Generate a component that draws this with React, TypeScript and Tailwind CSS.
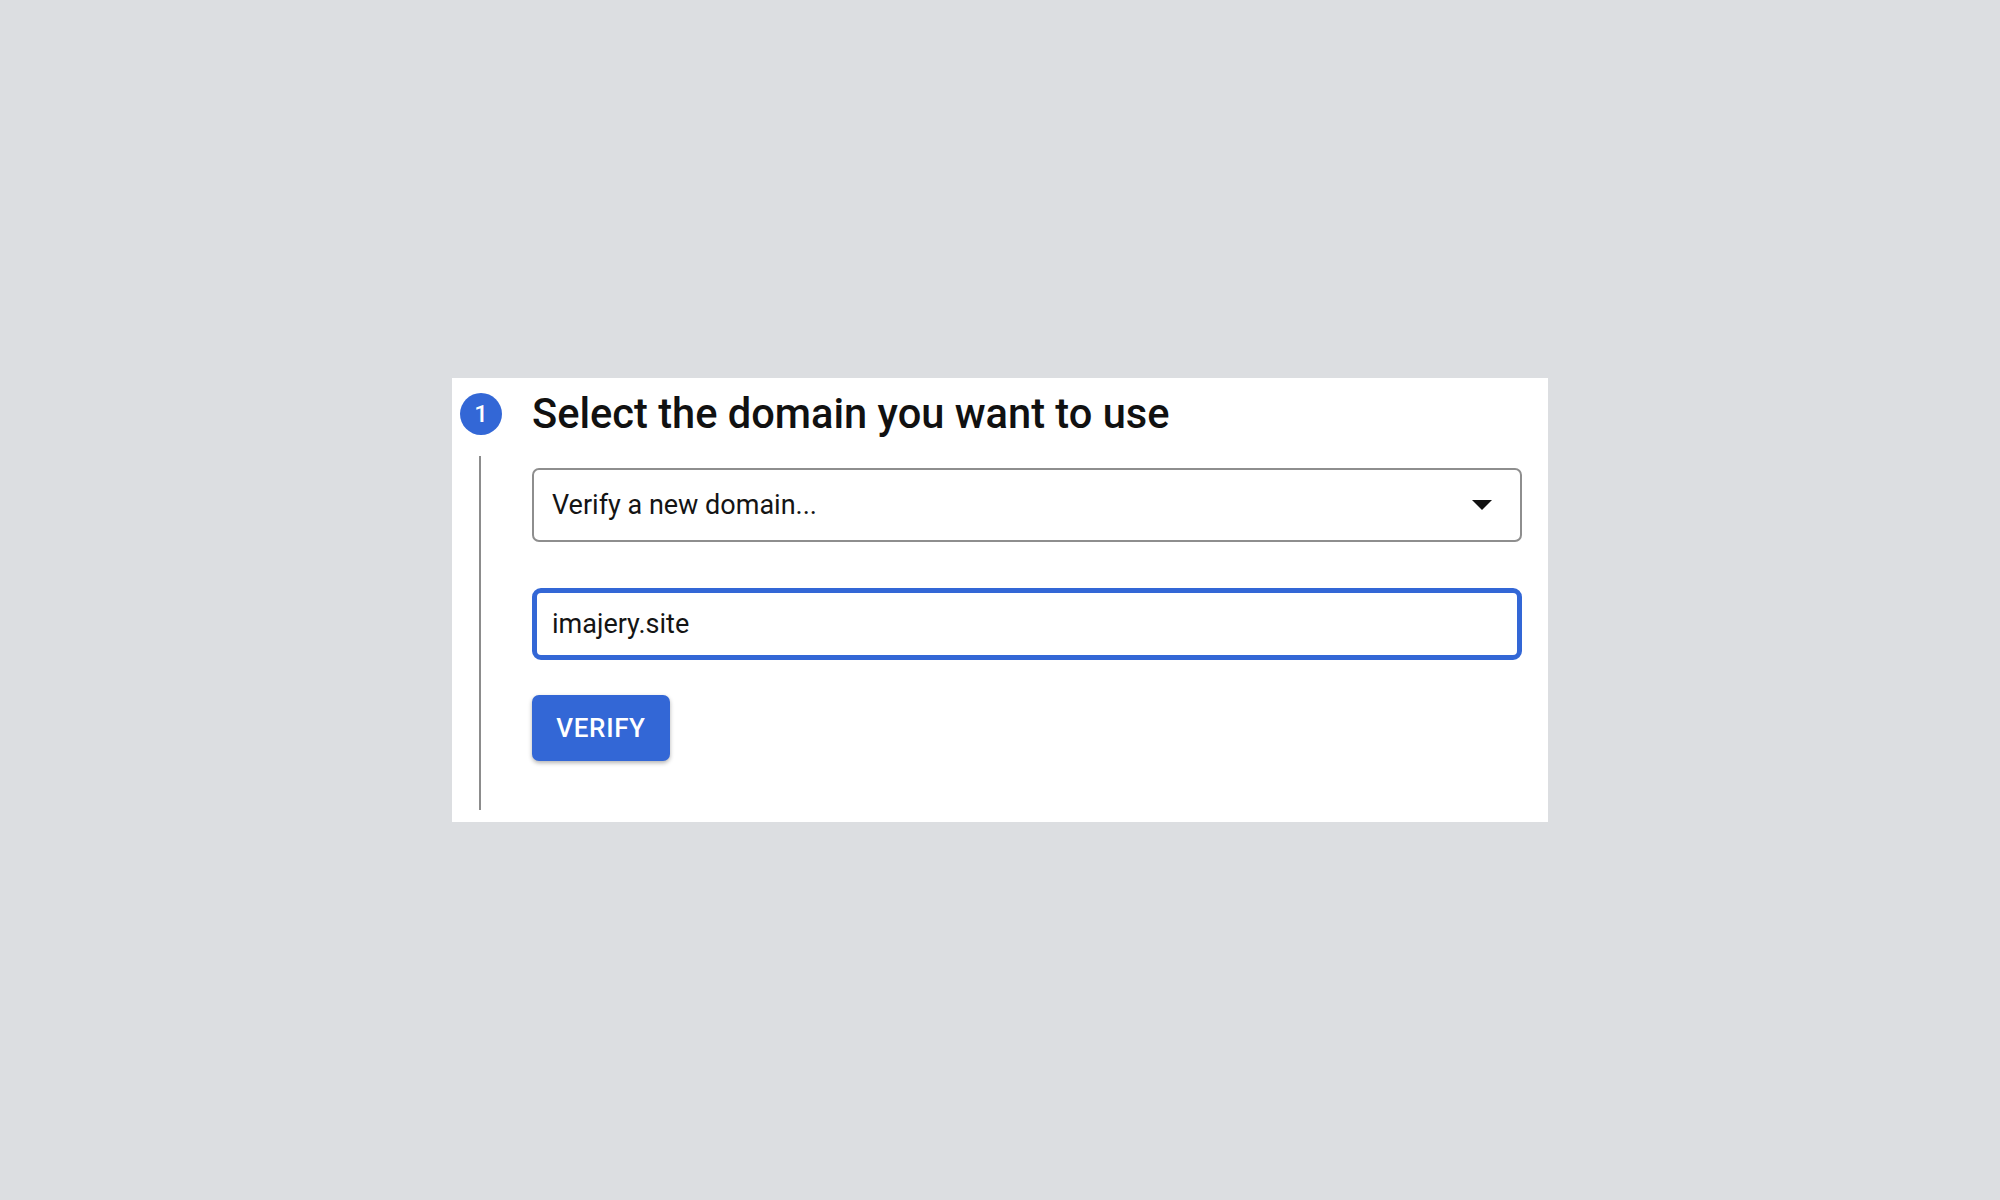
import React from 'react';

const App = () => {
  return (
    <div className="min-h-screen w-full bg-[#dcdee1] flex items-center justify-center" style={{ fontFamily: 'Roboto, "Liberation Sans", sans-serif' }}>
      {/* Step card */}
      <div className="w-[1096px] bg-white flex pt-[15px] pl-[8px] pr-[26px] pb-[12px]">
        {/* Step indicator column */}
        <div className="w-[42px] flex flex-col items-center shrink-0">
          <div className="w-[42px] h-[42px] rounded-full bg-[#3367d6] text-white flex items-center justify-center text-[24px] font-medium">
            1
          </div>
          <div className="w-[2px] flex-1 bg-[#8c8c8c] mt-[21px] -ml-[3px]"></div>
        </div>

        {/* Step content */}
        <div className="flex-1 ml-[30px] flex flex-col">
          <div className="h-[42px] flex items-center">
            <h2 className="text-[41.6px] font-medium text-[#111111] leading-none whitespace-nowrap">Select the domain you want to use</h2>
          </div>

          <div className="mt-[33px] h-[74px] border-2 border-[#8e8e8e] rounded-[7px] flex items-center justify-between pl-[18px] pr-[28px]">
            <span className="text-[27px] text-[#141414]">Verify a new domain...</span>
            <svg width="20" height="10" viewBox="0 0 20 10">
              <path d="M0 0 L20 0 L10 10 Z" fill="#111" />
            </svg>
          </div>

          <input
            readOnly
            value="imajery.site"
            className="mt-[46px] h-[72px] border-[5px] border-[#3367d6] rounded-[9px] pl-[15px] text-[27px] text-[#141414] outline-none"
          />

          <div className="mt-[35px] mb-[49px]">
            <button className="h-[66px] w-[138px] bg-[#3367d6] text-white text-[26px] font-medium rounded-[7px] shadow-[0_2px_4px_rgba(0,0,0,0.3)] tracking-wide">
              VERIFY
            </button>
          </div>
        </div>
      </div>
    </div>
  );
};

export default App;
